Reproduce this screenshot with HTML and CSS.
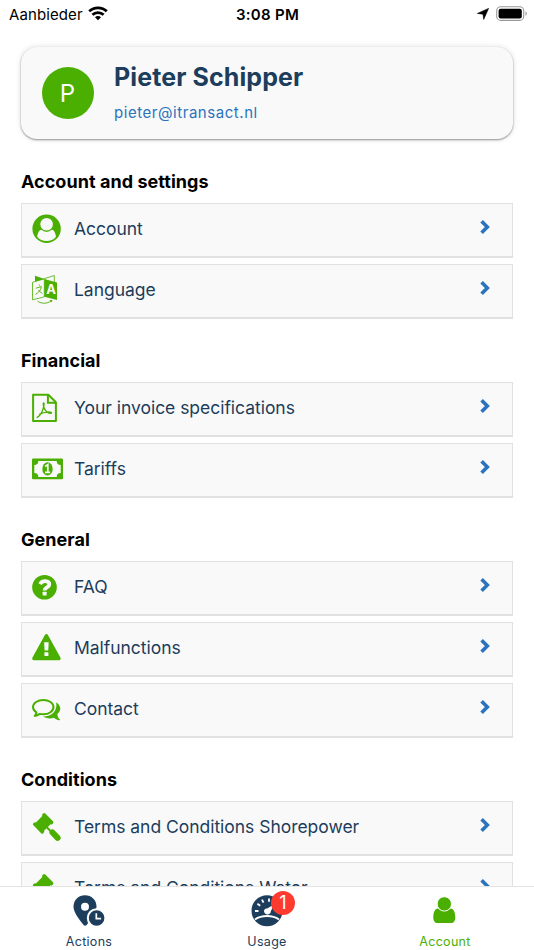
FILE: index.html
```html
<!DOCTYPE html>
<html lang="en">
<head>
  <meta charset="UTF-8" />
  <meta name="viewport" content="width=device-width, initial-scale=1.0" />
  <title>Account</title>
  <link rel="stylesheet" href="styles.css">
</head>
<body>
  <svg class="defs" width="0" height="0">
    <symbol id="chevron" viewBox="0 0 10 14">
      <path d="M1.6 1.3L7.3 7l-5.700 5.700" fill="none" stroke="currentColor" stroke-width="3.6" />
    </symbol>
    <symbol id="gavel" viewBox="0 0 32 32">
      <g fill="currentColor" transform="translate(11.2 12.3) rotate(-45)">
        <rect x="-6" y="-5.8" width="12" height="11.6" />
        <rect x="-8.4" y="-7" width="3.8" height="14" rx="1.5" />
        <rect x="4.6" y="-7" width="3.8" height="14" rx="1.5" />
      </g>
      <path d="M14 15.500l5 5" stroke="currentColor" stroke-width="2" />
      <path d="M20.500 21.500l5.100 5.300" stroke="currentColor" stroke-width="6" stroke-linecap="round" />
    </symbol>
  </svg>

  <header class="status">
    <div class="carrier">
      <span>Aanbieder</span>
      <svg width="20" height="15" viewBox="0 0 20 15" fill="none" stroke="#000" stroke-width="2.7">
        <path d="M1.2 5.3C6 .6 14 .6 18.8 5.3" />
        <path d="M4.4 8.800c3.100-3 8.100-3 11.200 0" />
        <path d="M10 14.300l-3-3.100c1.600-1.500 4.400-1.500 6 0z" fill="#000" stroke="none" />
      </svg>
    </div>
    <div class="clock">3:08 PM</div>
    <div class="battery">
      <svg width="12" height="12" viewBox="0 0 12 12"><path d="M11.6.4L6.7 11.4 6 6.2.4 5.4z" fill="#000" stroke="#000" stroke-width=".6" stroke-linejoin="round" /></svg>
      <svg width="32" height="16" viewBox="0 0 32 16">
        <rect x=".7" y=".8" width="27" height="13.6" rx="4" fill="none" stroke="#999" stroke-width="1.1" />
        <rect x="2.6" y="2.7" width="23.2" height="9.8" rx="2" />
        <path d="M29.500 5.300c1.800.8 1.800 3.800 0 4.600z" fill="#999" />
      </svg>
    </div>
  </header>

  <main>
    <div class="profile">
      <div class="avatar">P</div>
      <div>
        <h1>Pieter Schipper</h1>
        <a class="email">pieter@itransact.nl</a>
      </div>
    </div>

    <section>
      <h2>Account and settings</h2>
      <div class="rows">
        <div class="row">
          <svg class="icon" viewBox="0 0 32 32">
            <circle cx="14.6" cy="15.7" r="14.2" fill="currentColor" />
            <path d="M5.2 23.7c.5-4 2.2-7.2 4.8-7.2 2.7 2.5 6.5 2.5 9.2 0 2.6 0 4.3 3.2 4.8 7.2-4.4 5.8-14.400 5.800-18.800 0z" fill="#f9f9f9" />
            <circle cx="14.6" cy="11.2" r="6.9" fill="#f9f9f9" stroke="currentColor" stroke-width="1.2" />
          </svg>
          <span>Account</span>
          <svg class="chevron"><use href="#chevron" /></svg>
        </div>
        <div class="row">
          <svg class="icon" viewBox="0 0 32 32">
            <path d="M3 1.7l9.5 3.2-.2.6L3 8.1z" fill="currentColor" />
            <path d="M12.3 4.7l10-3.2v6.7" fill="none" stroke="currentColor" stroke-width=".8" />
            <path d="M.5 8.3l11.800-3.400v18L.5 25.800z" fill="#f9f9f9" stroke="currentColor" stroke-width=".8" />
            <path d="M12.300 4.900L25 8.400V26l-12.700-3.300z" fill="currentColor" />
            <text class="sign-a" x="14.2" y="20.2">A</text>
            <path d="M6.8 10.600l1.400 1.200M3.800 14.200l5.600-1.600c-.6 3.300-2.500 5.900-5.900 7.900M6.400 16.300l4 3.200" fill="none" stroke="currentColor" stroke-width=".9" />
            <path d="M5.600 27.200c4 2.800 9.600 2.600 13.600-.3" fill="none" stroke="currentColor" stroke-width=".9" />
            <path d="M17.700 26.100h2.800l-1.300 2.500z" fill="currentColor" />
          </svg>
          <span>Language</span>
          <svg class="chevron"><use href="#chevron" /></svg>
        </div>
      </div>
    </section>

    <section>
      <h2>Financial</h2>
      <div class="rows">
        <div class="row">
          <svg class="icon" viewBox="0 0 32 32" fill="none" stroke="currentColor">
            <path d="M1.100 2.700h15.200l7.600 7.600v18.600H1.100z" stroke-width="2" stroke-linejoin="round" />
            <path d="M15.900 3v7.800h7.800" stroke-width="2" />
            <path d="M5.200 25.400c3-1.300 6.600-7.200 6.900-13.800-.9-2-1.200 1.800.1 4.400 1.400 3.400 3.700 5.400 6.800 5.400 1.400-.4.1-1.500-3.100-1.300-3.400.2-6.300 1.100-8.200 2" stroke-width="1.400" stroke-linecap="round" />
          </svg>
          <span>Your invoice specifications</span>
          <svg class="chevron"><use href="#chevron" /></svg>
        </div>
        <div class="row">
          <svg class="icon" viewBox="0 0 32 32">
            <rect y="5.6" width="31" height="20.6" rx="1" fill="currentColor" />
            <path d="M6.300 7.900h18.400a4 4 0 0 0 4 4v8a4 4 0 0 0-4 4H6.300a4 4 0 0 0-4-4v-8a4 4 0 0 0 4-4z" fill="#f9f9f9" />
            <ellipse cx="15.5" cy="15.9" rx="5.2" ry="6.6" fill="currentColor" />
            <path d="M13.200 13.500l2.600-1.900v7.500M13 19.300h5.200" fill="none" stroke="#f9f9f9" stroke-width="1.7" />
          </svg>
          <span>Tariffs</span>
          <svg class="chevron"><use href="#chevron" /></svg>
        </div>
      </div>
    </section>

    <section>
      <h2>General</h2>
      <div class="rows">
        <div class="row">
          <svg class="icon" viewBox="0 0 32 32">
            <circle cx="12.5" cy="16.3" r="12.3" fill="currentColor" />
            <path d="M8.100 13.100c2-4.200 9.200-3.600 9.200.3 0 3.100-4.700 2.900-4.700 6" fill="none" stroke="#f9f9f9" stroke-width="3.800" />
            <rect x="10.6" y="20.8" width="4" height="3.8" rx=".5" fill="#f9f9f9" />
          </svg>
          <span>FAQ</span>
          <svg class="chevron"><use href="#chevron" /></svg>
        </div>
        <div class="row">
          <svg class="icon" viewBox="0 0 32 32">
            <path d="M14.400 3.800L27 26.500H1.900z" fill="currentColor" stroke="currentColor" stroke-width="3.5" stroke-linejoin="round" />
            <path d="M12.100 10.300h4.600l-.5 8.200h-3.600z" fill="#f9f9f9" />
            <rect x="12.4" y="20.2" width="4" height="3.9" rx=".4" fill="#f9f9f9" />
          </svg>
          <span>Malfunctions</span>
          <svg class="chevron"><use href="#chevron" /></svg>
        </div>
        <div class="row">
          <svg class="icon" viewBox="0 0 32 32">
            <path d="M24.200 9.600c4.800 2.600 5.600 8.200 1.200 11.300.1 2.800 1.200 4.300 2.800 5.800.1 1.300-4 .4-6.300-1.900-4.400 1.200-8.200.4-10.800-1.200 6.800.1 14.700-4.200 13.100-14z" fill="currentColor" />
            <path d="M11.300 6.900c5.600 0 10.200 3.200 10.200 7.200s-4.600 7.200-10.200 7.200c-1.200 0-2.400-.1-3.500-.4-1.500 1-3 1.800-5 2 .8-.8 1.400-1.800 1.700-3.400C2.400 18.200 1 16.300 1 14.100c0-4 4.700-7.200 10.300-7.200z" fill="#f9f9f9" stroke="currentColor" stroke-width="2" stroke-linejoin="round" />
          </svg>
          <span>Contact</span>
          <svg class="chevron"><use href="#chevron" /></svg>
        </div>
      </div>
    </section>

    <section>
      <h2>Conditions</h2>
      <div class="rows">
        <div class="row">
          <svg class="icon"><use href="#gavel" /></svg>
          <span>Terms and Conditions Shorepower</span>
          <svg class="chevron"><use href="#chevron" /></svg>
        </div>
        <div class="row">
          <svg class="icon"><use href="#gavel" /></svg>
          <span>Terms and Conditions Water</span>
          <svg class="chevron"><use href="#chevron" /></svg>
        </div>
      </div>
    </section>
  </main>

  <nav class="tabs">
    <div class="tab">
      <div class="tab-icon">
        <svg width="32" height="32" viewBox="0 0 32 32">
          <path d="M12 .2c6.400 0 11.500 4.800 11.500 11.200 0 5.800-5.300 12.600-9.900 18.500-.8 1-2.200 1-3 0C5.900 24 .5 17.200.5 11.400.5 5 5.600.2 12 .2z" fill="currentColor" />
          <circle cx="12" cy="11.7" r="4" fill="#fff" />
          <circle cx="23.6" cy="23" r="8.8" fill="currentColor" stroke="#fff" stroke-width="2" />
          <path d="M23.300 18.300v5.300h4.800" fill="none" stroke="#fff" stroke-width="1.7" />
        </svg>
      </div>
      <span>Actions</span>
    </div>
    <div class="tab">
      <div class="tab-icon">
        <svg width="32" height="32" viewBox="0 0 32 32">
          <circle cx="16" cy="15.7" r="15.5" fill="currentColor" />
          <path d="M4 24.500c6.500-4.600 17.500-4.600 24 0" fill="none" stroke="#fff" stroke-width="2" />
          <path d="M4 16h3.500M6.400 8.700l2.800 2M11 4.700l1.500 3M18 3.500v3.300" stroke="#fff" stroke-width="1.8" />
          <path d="M14.100 18.500c-2.300-2.200-.6-5.200 2.500-5.200l7-4.400-3.700 7c.1 3-3.500 4.800-5.800 2.600z" fill="#fff" />
        </svg>
        <span class="badge">1</span>
      </div>
      <span>Usage</span>
    </div>
    <div class="tab active">
      <div class="tab-icon">
        <svg width="32" height="32" viewBox="0 0 32 32" fill="currentColor">
          <path d="M9 13.500c3.500 3 9 3 12.500 0 3.500.2 4.800 4.600 4.800 9.200 0 3-1.700 5.400-4.200 5.400H8.500c-2.500 0-4.200-2.400-4.200-5.400 0-4.600 1.200-9 4.700-9.200z" />
          <circle cx="15.3" cy="8.9" r="7.2" stroke="#fff" />
        </svg>
      </div>
      <span>Account</span>
    </div>
  </nav>
</body>
</html>
```
FILE: styles.css
```css
* {
  box-sizing: border-box;
}
body {
  margin: 0;
  height: 950px;
  display: flex;
  flex-direction: column;
  overflow: hidden;
  background-color: #fff;
  color: #1c3d5c;
  font-family: Inter, "Liberation Sans", sans-serif;
}
.defs {
  position: absolute;
}
.status {
  flex: none;
  display: grid;
  grid-template-columns: 1fr auto 1fr;
  align-items: center;
  height: 28px;
  padding: 0 6px 0 9px;
  color: #000;
  font-size: 15px;
}
.carrier {
  display: flex;
  align-items: center;
  gap: 5px;
  letter-spacing: 0.1px;
}
.carrier svg {
  margin-top: -2px;
}
.clock {
  padding-right: 2px;
  font-weight: 600;
  letter-spacing: 0.3px;
}
.battery {
  display: flex;
  align-items: center;
  justify-content: flex-end;
  gap: 7px;
}
main {
  flex: 1;
  min-height: 0;
  overflow: hidden;
  padding: 19px 21px 0;
}
.profile {
  display: flex;
  align-items: center;
  gap: 20.500px;
  height: 92px;
  margin-bottom: 32px;
  padding-left: 20.500px;
  border-radius: 16px;
  background-color: #f9f9f9;
  box-shadow: 0 1px 2px rgba(0, 0, 0, 0.4), 0 0 6px rgba(0, 0, 0, 0.12);
}
.avatar {
  width: 52px;
  height: 52px;
  border-radius: 50%;
  background-color: #4aaf00;
  color: #fff;
  font-size: 24px;
  line-height: 53px;
  text-align: center;
}
h1 {
  margin: 0 0 12px;
  font-size: 25px;
  line-height: 28px;
  letter-spacing: 0.1px;
}
.email {
  display: block;
  color: #2b73bd;
  font-size: 15px;
  line-height: 20px;
  letter-spacing: 0.55px;
}
section {
  margin-bottom: 31.6px;
}
h2 {
  margin: 0 0 10px;
  color: #000;
  font-size: 18px;
  line-height: 22px;
  letter-spacing: 0.05px;
}
.rows {
  display: grid;
  gap: 5.6px;
}
.row {
  display: flex;
  align-items: flex-start;
  height: 55px;
  padding: 9px 22px 0 10px;
  border: 1px solid #dfe1e3;
  border-bottom-width: 2px;
  background-color: #f9f9f9;
  font-size: 17.5px;
  line-height: 31px;
  letter-spacing: -0.03px;
}
.row span {
  flex: 1;
}
.icon {
  width: 32px;
  height: 32px;
  margin-right: 10px;
  color: #4aaf00;
}
.sign-a {
  fill: #f9f9f9;
  font-size: 13px;
  font-weight: 700;
}
.chevron {
  width: 10px;
  height: 14px;
  margin-top: 7px;
  color: #2b73bd;
}
.tabs {
  flex: none;
  display: flex;
  height: 64px;
  border-top: 1px solid #e4e4e4;
  background-color: #fff;
}
.tab {
  flex: 1;
  display: flex;
  flex-direction: column;
  align-items: center;
  padding-top: 8px;
  font-size: 12.5px;
  line-height: 16px;
  letter-spacing: 0.3px;
}
.tab.active {
  color: #4aaf00;
}
.tab-icon {
  position: relative;
  height: 39px;
}
.badge {
  position: absolute;
  top: -4px;
  left: 20px;
  width: 24px;
  height: 24px;
  border-radius: 50%;
  background-color: #ff3b30;
  color: #fff;
  font-size: 18px;
  line-height: 24px;
  letter-spacing: 0;
  text-align: center;
}
```
